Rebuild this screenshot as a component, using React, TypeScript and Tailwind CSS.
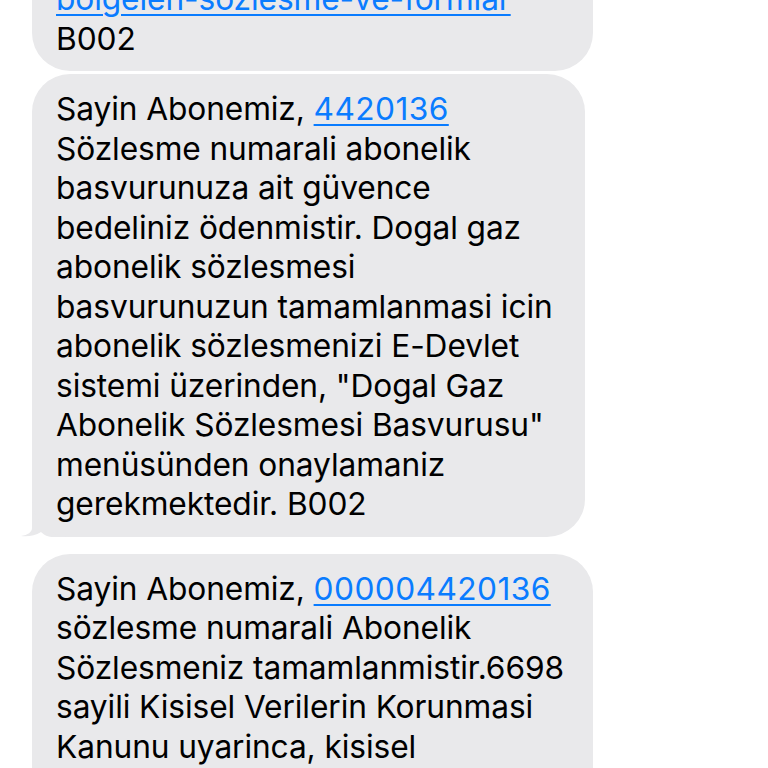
import React from 'react'

const font = { fontFamily: 'Inter, "Noto Sans", sans-serif' }

function Link({ children, wide }: { children: React.ReactNode; wide?: boolean }) {
  return (
    <span
      className={`${wide ? 'tracking-[0.4px]' : ''} text-[#0a7cff] underline decoration-[1.5px] underline-offset-[4px]`}
    >
      {children}
    </span>
  )
}

function Bubble({
  lines,
  width,
  tail,
  className = '',
}: {
  lines: React.ReactNode[]
  width: string
  tail?: boolean
  className?: string
}) {
  return (
    <div className={`relative ${width} ${className}`}>
      <div className="relative z-10 rounded-[38px] bg-[#e9e9eb] pl-[24px] pr-4 pt-[15px] pb-[13px]">
        {lines.map((l, i) => (
          <div key={i} className="whitespace-nowrap">
            {l}
          </div>
        ))}
      </div>
      {tail && (
        <svg className="absolute -left-[12px] bottom-0 z-0" width="52" height="40" viewBox="-12 -40 52 40">
          <path
            d="M0 -40 L0 -9 C0 -5 -4 -2 -11 -1 C-5 0 3 -1 9 -5 C12 -2 16 0 22 0 L40 0 L40 -40 Z"
            fill="#e9e9eb"
          />
        </svg>
      )}
    </div>
  )
}

export default function App() {
  return (
    <div className="h-[768px] w-[768px] overflow-hidden bg-white text-black" style={font}>
      <div className="-mt-[36px] flex flex-col pl-8 text-[31.7px] leading-[39.5px] tracking-[-0.1px]">
        <Bubble
          width="w-[561px]"
          className="mb-[3px]"
          lines={[<Link>bölgelen-sözlesme-ve-formlar</Link>, 'B002']}
        />
        <Bubble
          width="w-[553px]"
          tail
          className="mb-[17px]"
          lines={[
            <>
              Sayin Abonemiz, <Link wide>4420136</Link>
            </>,
            'Sözlesme numarali abonelik',
            'basvurunuza ait güvence',
            'bedeliniz ödenmistir. Dogal gaz',
            'abonelik sözlesmesi',
            'basvurunuzun tamamlanmasi icin',
            'abonelik sözlesmenizi E-Devlet',
            'sistemi üzerinden, "Dogal Gaz',
            'Abonelik Sözlesmesi Basvurusu"',
            'menüsünden onaylamaniz',
            'gerekmektedir. B002',
          ]}
        />
        <Bubble
          width="w-[561px]"
          lines={[
            <>
              Sayin Abonemiz, <Link wide>000004420136</Link>
            </>,
            'sözlesme numarali Abonelik',
            'Sözlesmeniz tamamlanmistir.6698',
            'sayili Kisisel Verilerin Korunmasi',
            'Kanunu uyarinca, kisisel',
            'verilerinizin islenmesine',
          ]}
        />
      </div>
    </div>
  )
}
